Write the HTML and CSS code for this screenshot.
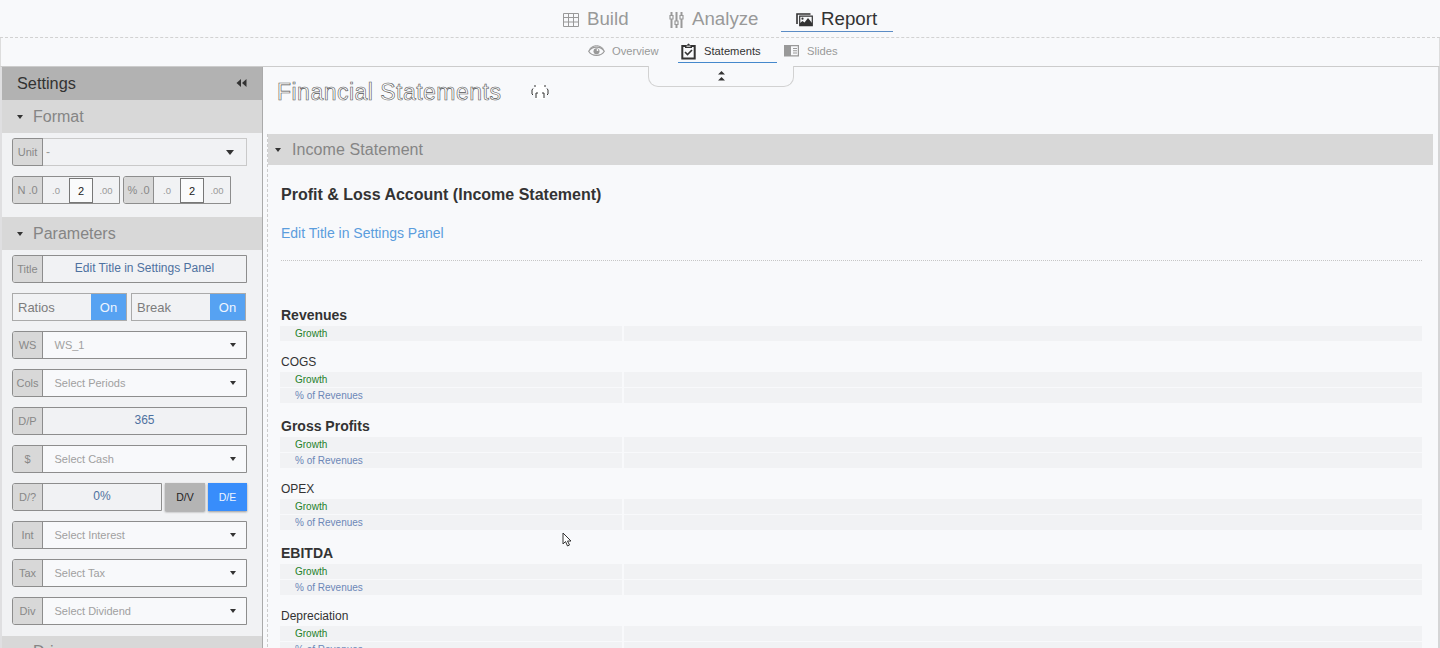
FILE: index.html
```html
<!DOCTYPE html>
<html lang="en">
<head>
<meta charset="utf-8">
<title>Financial Statements</title>
<link rel="stylesheet" href="styles.css">
</head>
<body>
<header>
  <nav class="main-nav">
    <a class="tab build"><svg width="17" height="15" viewBox="0 0 17 15"><path d="M.5 .5h15v13H.5zM.5 4.500h15M.5 9h15M5.500 .5V13.500M10.500 .5V13.500" fill="none" stroke="#999"/></svg><span>Build</span></a>
    <a class="tab analyze"><svg width="15" height="17" viewBox="0 0 15 17" fill="none" stroke="#999"><path d="M2.500 0v3.500M2.500 7v9M7.500 0v9M7.500 13v3M12.500 0v3.500M12.500 7v9" stroke-width="2"/><path d="M1 3.500h3V7H1zM6 9h3v3.500H6zM11 3.500h3V7h-3z" stroke-width="1.200"/></svg><span>Analyze</span></a>
    <a class="tab report active"><svg width="18" height="14" viewBox="0 0 18 14"><path d="M1 11V1h13.500" fill="none" stroke="#333" stroke-width="1.600"/><path d="M3.700 3.200h12.600v9.500H3.700z" fill="#f8f9fb" stroke="#333" stroke-width="1.200"/><path d="M4 12.500v-2.500l2.500-2 2 1.500 3.500-4.500 4 5v2.500z" fill="#333"/><circle cx="6.500" cy="5.700" r="1.100" fill="#333"/></svg><span>Report</span></a>
  </nav>
  <nav class="sub-nav">
    <a class="subtab overview"><svg width="17" height="12" viewBox="0 0 17 12"><path d="M.7 6.300C4 .8 13 .8 16.300 6.300 13 11.800 4 11.800 .7 6.300z" fill="none" stroke="#999" stroke-width="1.200"/><path d="M1.500 4C6-.4 11-.4 15.500 4" fill="none" stroke="#999"/><circle cx="8.500" cy="6.200" r="3" fill="#999"/><circle cx="9.500" cy="5" r=".9" fill="#fff"/></svg><span>Overview</span></a>
    <a class="subtab statements active"><svg width="15" height="17" viewBox="0 0 15 17"><path d="M4 3H1.300v12.500h12.400V3H11" fill="none" stroke="#333" stroke-width="2"/><path d="M4 5V2h2q1.500-3 3 0h2v3z" fill="#333"/><path d="M5.500 3.200h4" stroke="#f8f9fb"/><path d="M4 9l2.500 2.500L11 7" fill="none" stroke="#333" stroke-width="1.600"/></svg><span>Statements</span></a>
    <a class="subtab slides"><svg width="15" height="12" viewBox="0 0 15 12"><path d="M.6 .6h13.800v10.300H.6z" fill="none" stroke="#999" stroke-width="1.200"/><path d="M1 1h6v10H1zM9 3h4v1H9zM9 5.200h4v1H9zM9 7.400h4v1H9z" fill="#999"/></svg><span>Slides</span></a>
  </nav>
  <div class="notch"><svg width="7" height="11" viewBox="0 0 7 11"><path d="M0 4.500 3.500 1 7 4.500zM0 10.500 3.500 7 7 10.500z" fill="#333"/></svg></div>
</header>
<div class="workspace">
  <aside>
    <h2 class="settings"><span>Settings</span><svg width="11" height="8" viewBox="0 0 11 8"><path d="M5 0v8L.5 4zM10.500 0v8L6 4z" fill="#333"/></svg></h2>
    <h3 class="band"><i class="arrow"></i><span>Format</span></h3>
    <div class="fields format">
      <div class="field unit"><label>Unit</label><div class="value">-</div><i class="arrow"></i></div>
      <div class="decimals">
        <div class="stepper"><label>N .0</label><span>.0</span><b>2</b><span>.00</span></div>
        <div class="stepper"><label>% .0</label><span>.0</span><b>2</b><span>.00</span></div>
      </div>
    </div>
    <h3 class="band"><i class="arrow"></i><span>Parameters</span></h3>
    <div class="fields params">
      <div class="field input"><label>Title</label><div class="value">Edit Title in Settings Panel</div></div>
      <div class="toggles"><div class="toggle"><span>Ratios</span><b>On</b></div><div class="toggle"><span>Break</span><b>On</b></div></div>
      <div class="field select"><label>WS</label><div class="value">WS_1</div><i class="arrow"></i></div>
      <div class="field select"><label>Cols</label><div class="value">Select Periods</div><i class="arrow"></i></div>
      <div class="field input"><label>D/P</label><div class="value">365</div></div>
      <div class="field select"><label>$</label><div class="value">Select Cash</div><i class="arrow"></i></div>
      <div class="debt"><div class="field input"><label>D/?</label><div class="value">0%</div></div><button class="dv">D/V</button><button class="de">D/E</button></div>
      <div class="field select"><label>Int</label><div class="value">Select Interest</div><i class="arrow"></i></div>
      <div class="field select"><label>Tax</label><div class="value">Select Tax</div><i class="arrow"></i></div>
      <div class="field select"><label>Div</label><div class="value">Select Dividend</div><i class="arrow"></i></div>
    </div>
    <h3 class="band drivers"><i class="arrow"></i><span>Drivers</span></h3>
  </aside>
  <main>
    <div class="page-title"><h1>Financial Statements</h1><svg width="18" height="16" viewBox="0 0 18 16" fill="none"><path d="M4 5V1h10v4h3v6h-3v4H4v-4H1V5z" fill="#fff"/><path d="M4 1v2M14 1v2M2 4.500 1 6v4l1 1M16 4.500 17 6v4l-1 1M5 9v5M13 9v5M5 9h2M11 9h2" stroke="#333"/></svg></div>
    <section class="statement">
      <h3 class="band income"><i class="arrow"></i><span>Income Statement</span></h3>
      <div class="sheet">
        <h2>Profit &amp; Loss Account (Income Statement)</h2>
        <p class="subtitle">Edit Title in Settings Panel</p>
        <hr>
        <div class="group total first"><h4>Revenues</h4><div class="row growth"><span>Growth</span><span></span></div></div>
        <div class="group"><h4>COGS</h4><div class="row growth"><span>Growth</span><span></span></div><div class="row ratio"><span>% of Revenues</span><span></span></div></div>
        <div class="group total"><h4>Gross Profits</h4><div class="row growth"><span>Growth</span><span></span></div><div class="row ratio"><span>% of Revenues</span><span></span></div></div>
        <div class="group"><h4>OPEX</h4><div class="row growth"><span>Growth</span><span></span></div><div class="row ratio"><span>% of Revenues</span><span></span></div></div>
        <div class="group total"><h4>EBITDA</h4><div class="row growth"><span>Growth</span><span></span></div><div class="row ratio"><span>% of Revenues</span><span></span></div></div>
        <div class="group"><h4>Depreciation</h4><div class="row growth"><span>Growth</span><span></span></div><div class="row ratio"><span>% of Revenues</span><span></span></div></div>
      </div>
    </section>
  </main>
</div>
<svg class="cursor" width="10" height="15" viewBox="0 0 10 15"><path d="M1 1v11l2.500-2.500L5.500 14l2-1-2-4H9z" fill="#fff" stroke="#333"/></svg>
</body>
</html>
```

FILE: styles.css
```css
* { box-sizing: border-box; }
body { margin: 0; height: 648px; overflow: hidden; position: relative; background: #f8f9fb; color: #333; font-family: "Liberation Sans", Arial, sans-serif; }
h1, h2, h3, h4, p { margin: 0; font-weight: normal; }
svg { display: block; flex: none; }
.main-nav { height: 38px; border-bottom: 1px dashed #d2d2d2; display: flex; padding-left: 563px; }
.tab { display: flex; align-items: center; height: 32px; padding-top: 6px; gap: 7px; font-size: 18.7px; color: #999; }
.tab svg { margin-top: 2px; }
.build { width: 106px; }
.analyze { width: 112px; gap: 8px; }
.report { width: 112px; padding-left: 15px; }
.tab.active { color: #333; border-bottom: 1px solid #5b8cc5; }
.sub-nav { height: 29px; border-bottom: 1px solid #ccc; border-left: 1px solid #ddd; border-right: 1px solid #ddd; display: flex; padding-left: 587px; }
.subtab { display: flex; align-items: center; height: 25px; padding-top: 1px; gap: 7px; font-size: 11.2px; color: #999; }
.overview { width: 90px; }
.statements { width: 99px; padding-left: 3px; gap: 8px; }
.slides { padding-left: 7px; gap: 8px; }
.subtab.active { color: #333; border-bottom: 1px solid #4488cc; padding-top: 2px; }
.notch { position: absolute; left: 648px; top: 66px; width: 146px; height: 21px; border: 1px solid #d2d2d2; border-top: 0; border-radius: 0 0 10px 10px; background: #f8f9fb; display: flex; justify-content: center; padding-top: 4px; }
.workspace { display: flex; height: 581px; }
aside { width: 263px; border-left: 2px solid #dfdfe1; border-right: 1px solid #aaa; background: #f1f2f4; overflow: hidden; }
.settings { height: 33px; background: #b2b2b2; display: flex; align-items: center; justify-content: space-between; padding: 0 15px; font-size: 16.3px; }
.settings svg { margin-top: -2px; }
.band { height: 33px; background: #d8d8d8; color: #858585; display: flex; align-items: center; font-size: 16px; padding-left: 15px; }
.band span { margin-left: 10px; }
.drivers { height: 31px; }
.arrow { width: 0; height: 0; flex: none; border: 3px solid transparent; border-top: 4px solid #333; border-bottom: 0; }
.fields { display: flex; flex-direction: column; gap: 10px; padding: 5px 15px 0 10px; }
.format { height: 84px; }
.params { height: 386px; padding-top: 5px; }
.field { height: 28px; flex: none; display: flex; align-items: center; border: 1px solid #8d8d8d; border-radius: 3px 0 0 3px; }
label { width: 30px; height: 100%; flex: none; display: flex; align-items: center; justify-content: center; font-size: 11px; color: #888; background: #d8d8d8; border-right: 1px solid #8d8d8d; border-radius: 2px 0 0 2px; }
.value { flex: 1; }
.select { background: #f8f9fb; color: #a0a0a0; }
.select .value { padding-left: 11.5px; font-size: 11px; }
.select .arrow { margin-right: 10px; }
.unit { border-color: #c9c9c9; font-size: 12px; color: #999; border-left-color: #8d8d8d; }
.unit .value { padding-left: 3px; }
.unit label { height: 28px; border: 1px solid #8d8d8d; border-left: 0; }
.unit .arrow { border-width: 5px 4px 0; margin-right: 12px; }
.input .value { text-align: center; color: #4e719f; font-size: 12px; padding-bottom: 2px; }
.decimals, .toggles, .debt { display: flex; height: 28px; flex: none; }
.decimals { gap: 3px; }
.stepper { width: 108px; display: flex; align-items: center; border: 1px solid #8d8d8d; border-radius: 3px 0 0 3px; font-size: 9.5px; color: #999; }
.stepper span { flex: 1; text-align: center; }
.stepper b { width: 24px; height: 25px; line-height: 25px; border: 1px solid #777; background: #fafbfc; color: #222; font-size: 11px; font-weight: normal; text-align: center; }
.toggles { gap: 4px; }
.toggle { width: 115px; display: flex; border: 1px solid #aaa; font-size: 13px; line-height: 27px; color: #7c7c7c; }
.toggle span { flex: 1; padding-left: 5px; }
.toggle b { width: 35px; font-weight: normal; text-align: center; background: #56a2f2; color: #eef5ff; }
.debt .field { width: 150px; }
button { font: 10.5px "Liberation Sans", Arial, sans-serif; border: 0; height: 28px; padding: 0; box-shadow: 0 1px 2px #999; }
.dv { width: 40px; margin: 0 3px; background: #b4b4b4; color: #222; }
.de { width: 39px; background: #388dfb; color: #edf4ff; }
main { flex: 1; border-right: 2px solid #d5d5d6; padding: 0 5px 0 4px; }
.page-title { height: 67px; display: flex; align-items: flex-start; padding: 11px 0 0 10px; }
.page-title h1 { width: 254px; font-size: 23px; line-height: 28px; letter-spacing: .48px; color: #fff; -webkit-text-stroke: .6px #555; }
.page-title svg { margin-top: 6px; }
.income { height: 31px; padding-left: 7px; }
.income span { margin-left: 11px; letter-spacing: .08px; }
.statement { border-left: 1px dashed #ccc; }
.sheet { padding: 18px 11px 0 12px; }
.sheet h2 { font-size: 16px; font-weight: bold; line-height: 24px; padding-left: 1px; }
.subtitle { margin: 15px 0 0 1px; line-height: 22px; font-size: 14px; color: #5b9ddd; }
hr { margin: 16px 0 44px 1px; border: 0; border-top: 1px dotted #c6c6c6; }
.group { margin-top: 12px; }
.group h4 { height: 19px; line-height: 19px; padding-left: 1px; font-size: 12px; }
.total { margin-top: 13px; }
.total h4 { height: 21px; line-height: 21px; font-size: 14px; font-weight: bold; }
.first { margin-top: 0; }
.row { display: grid; grid-template-columns: 342px 1fr; gap: 2px; height: 15px; margin-bottom: 1px; line-height: 15px; font-size: 10px; }
.row span { background: #f1f2f4; }
.row span:first-child { padding-left: 15px; }
.growth { color: #24812b; }
.ratio { color: #6c87b7; }
.cursor { position: absolute; left: 562px; top: 532px; }
```
